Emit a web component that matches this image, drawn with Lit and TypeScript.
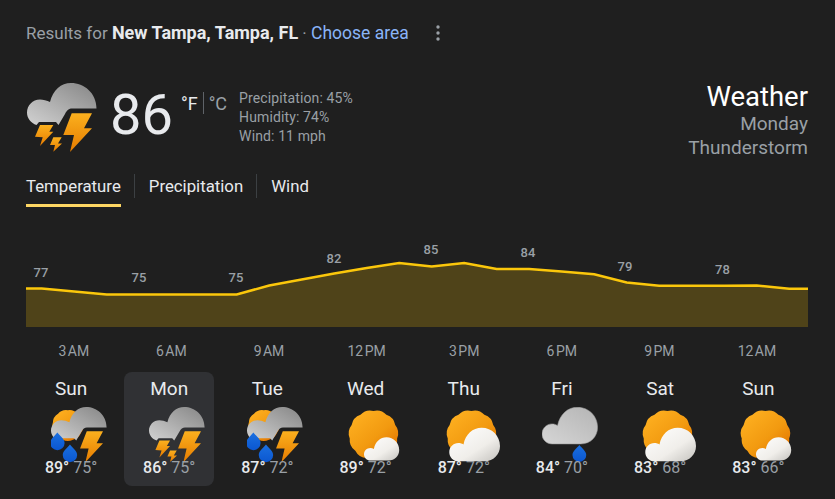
import { LitElement, html, css, svg } from "lit";
import { customElement } from "lit/decorators.js";

type Kind = "thunder" | "thunderRain" | "sunSmall" | "sunBig" | "rain";

const CLOUD_CUT =
  "M69.5 25.5C69.5 10 57 0 44 0C34 0 26 7 23 19C20 17.5 16 16.5 13 16.5C5.5 16.5 0 22.5 0 29.5C0 35.5 4 40 9.5 42L12 39L29 39L31.5 42L38 31C40 27 42 25.5 45 25.5Z";
const CLOUD =
  "M18 70C8 70 0 62 0 52C0 42 8 34 18 34C22 34 25 35 28 37C32 17 46 4 64 4C84 4 100 20 100 40C100 57 87 70 70 70Z";
const BOLT_BIG = "44.7,30.3 65,30.3 57,45.3 65,45.3 43,69 47,52 36.3,52";
const BOLT_A = "13,42 26.3,42 22.3,48.7 26.3,48.7 13,63 15.7,54.3 8,53.7";
const BOLT_B = "26.3,54.3 34.7,54.3 31,60.5 35,60.5 26.3,68.7 28,62 23,62";

function drop(cx: number, cy: number, r: number) {
  const top = cy - r * 1.45;
  return `M${cx} ${top}C${cx + r * 0.35} ${cy - r} ${cx + r} ${cy - r * 0.55} ${cx + r} ${cy}A${r} ${r} 0 1 1 ${cx - r} ${cy}C${cx - r} ${cy - r * 0.55} ${cx - r * 0.35} ${cy - r} ${cx} ${top}Z`;
}

function scallop(cx: number, cy: number, r: number, lobes: number) {
  let d = "";
  for (let i = 0; i < lobes; i++) {
    const a0 = (i / lobes) * Math.PI * 2 - Math.PI / 2;
    const a1 = ((i + 0.5) / lobes) * Math.PI * 2 - Math.PI / 2;
    const a2 = ((i + 1) / lobes) * Math.PI * 2 - Math.PI / 2;
    const inner = r * 0.95;
    const outer = r * 1.07;
    if (i === 0) d += `M${cx + inner * Math.cos(a0)} ${cy + inner * Math.sin(a0)}`;
    d += `Q${cx + outer * Math.cos(a1)} ${cy + outer * Math.sin(a1)} ${cx + inner * Math.cos(a2)} ${cy + inner * Math.sin(a2)}`;
  }
  return d + "Z";
}

function icon(kind: Kind, size: number) {
  let body;
  if (kind === "thunder") {
    body = svg`<path d=${CLOUD_CUT} fill="url(#gGrey)"/>
      <polygon points=${BOLT_BIG} fill="url(#gBolt)"/>
      <polygon points=${BOLT_A} fill="url(#gBolt)"/>
      <polygon points=${BOLT_B} fill="url(#gBolt)"/>`;
  } else if (kind === "thunderRain") {
    body = svg`<path d=${scallop(21, 23, 20, 9)} fill="url(#gSun)"/>
      <path d=${CLOUD_CUT} fill="url(#gGrey)"/>
      <polygon points=${BOLT_BIG} fill="url(#gBolt)"/>
      <path d=${drop(8, 45, 9)} fill="url(#gDrop)"/>
      <path d=${drop(23.7, 60, 9)} fill="url(#gDrop)"/>`;
  } else if (kind === "rain") {
    body = svg`<g transform="translate(0 -2.5) scale(.695)"><path d=${CLOUD} fill="url(#gFri)" stroke="#9c9c9c" stroke-width="1"/></g>
      <path d=${drop(46.7, 60, 8.6)} fill="url(#gDrop)"/>`;
  } else {
    const t = kind === "sunSmall" ? "translate(22.5 36.2) scale(.44)" : "translate(6.6 23.5) scale(.634)";
    body = svg`<path d=${scallop(34.3, 35, 31.5, 11)} fill="url(#gSun)"/>
      <g transform=${t}><path d=${CLOUD} fill="url(#gWhite)"/></g>`;
  }
  return html`<svg class="icon" width=${size} height=${size} viewBox="0 0 70 70">${body}</svg>`;
}

const TIMES = ["3 AM", "6 AM", "9 AM", "12 PM", "3 PM", "6 PM", "9 PM", "12 AM"];
const DAYS: { d: string; k: Kind; hi: number; lo: number; sel?: boolean }[] = [
  { d: "Sun", k: "thunderRain", hi: 89, lo: 75 },
  { d: "Mon", k: "thunder", hi: 86, lo: 75, sel: true },
  { d: "Tue", k: "thunderRain", hi: 87, lo: 72 },
  { d: "Wed", k: "sunSmall", hi: 89, lo: 72 },
  { d: "Thu", k: "sunBig", hi: 87, lo: 72 },
  { d: "Fri", k: "rain", hi: 84, lo: 70 },
  { d: "Sat", k: "sunBig", hi: 83, lo: 68 },
  { d: "Sun", k: "sunSmall", hi: 83, lo: 66 },
];
const LINE_Y = [288.5, 291.5, 294.5, 294.5, 294.5, 294.5, 294.5, 285.5, 279.5, 273.5, 268, 263, 266.5, 263, 269, 269, 271.5, 274.2, 282.5, 285.7, 285.7, 285.7, 285.5, 288.7];
const TEMPS = [
  { t: 77, x: 15, y: 272 },
  { t: 75, x: 113, y: 277 },
  { t: 75, x: 210, y: 277 },
  { t: 82, x: 308, y: 258 },
  { t: 85, x: 405, y: 249 },
  { t: 84, x: 502, y: 252 },
  { t: 79, x: 599, y: 266 },
  { t: 78, x: 696.5, y: 269 },
];

@customElement("app-root")
export class AppRoot extends LitElement {
  static styles = css`
    :host {
      display: block;
      width: 835px;
      height: 499px;
      overflow: hidden;
      box-sizing: border-box;
      padding: 23px 27px 0 26px;
      background: #1f1f1f;
      color: #e8eaed;
      font-family: Roboto, "Liberation Sans", sans-serif;
    }
    .defs { position: absolute; width: 0; height: 0; }
    .head {
      display: flex;
      align-items: center;
      height: 20px;
      font-size: 17px;
      line-height: 20px;
      color: #9aa0a6;
      white-space: pre;
    }
    .head b { font-weight: 700; font-size: 18px; color: #e8eaed; }
    .head .link { color: #8ab4f8; font-size: 17.5px; }
    .dots { margin-left: 26px; display: block; }
    .main { display: flex; align-items: flex-start; margin-top: 39px; height: 78px; margin-bottom: 14px; }
    .main .icon { display: block; margin: 1px 0 0 1px; flex: none; }
    .now { font-size: 56px; line-height: 66px; margin: 0 0 0 13px; color: #e8eaed; }
    .units { display: flex; align-items: center; margin: 10px 0 0 8px; font-size: 18px; height: 22px; color: #9aa0a6; }
    .units b { font-weight: 400; color: #e8eaed; }
    .units i { display: block; width: 1px; height: 22px; background: #5f6368; margin: 0 5px; }
    .stats { margin: 7px 0 0 12px; font-size: 14px; line-height: 19px; color: #9aa0a6; letter-spacing: 0.12px; }
    .title { margin-left: auto; text-align: right; color: #9aa0a6; font-size: 19px; line-height: 24px; }
    .title .w { color: #fff; font-size: 27.5px; line-height: 30px; }
    .tabs { display: flex; align-items: flex-start; height: 33px; font-size: 16.8px; line-height: 24px; }
    .tab { padding-bottom: 6px; border-bottom: 3px solid transparent; }
    .tab.on { border-bottom-color: #fdd663; }
    .sep { width: 1px; height: 24px; background: #3c4043; margin: 0 14px 0 13px; }
    .chart { display: block; margin-top: 23px; }
    .chart text { font: 500 13px Roboto, sans-serif; fill: #9aa0a6; text-anchor: middle; }
    .times { display: grid; grid-template-columns: repeat(8, 97.6px); margin: 14px 0 0 -1px; font-size: 14px; line-height: 20px; color: #9aa0a6; text-align: center; word-spacing: -2px; }
    .days { display: grid; grid-template-columns: repeat(8, 90px); column-gap: 8.2px; margin-top: 11px; }
    .day { height: 114px; box-sizing: border-box; padding-top: 7px; border-radius: 8px; display: flex; flex-direction: column; align-items: center; }
    .day.sel { background: #303134; }
    .name { font-size: 19px; line-height: 20px; color: #e8eaed; }
    .day .icon { display: block; margin: 8px 0 0 16px; }
    .hl { position: relative; font-size: 16px; line-height: 20px; margin-top: -5px; white-space: pre; color: #9aa0a6; }
    .hl b { font-weight: 500; color: #e8eaed; }
  `;

  render() {
    const pts = LINE_Y.map((y, i) => `${15.7 + 32.5 * i} ${y - 230}`);
    const line = `M0 ${LINE_Y[0] - 230}L${pts.join("L")}L782 ${LINE_Y[23] - 230}`;
    const area = `${line}L782 97L0 97Z`;
    return html`
      <svg class="defs" aria-hidden="true">
        <defs>
          <linearGradient id="gGrey" x1="0" y1="1" x2="1" y2="0">
            <stop offset="0" stop-color="#d2d2d2"/><stop offset="1" stop-color="#858585"/>
          </linearGradient>
          <linearGradient id="gFri" x1="0" y1="1" x2="1" y2="0">
            <stop offset="0" stop-color="#d6d6d6"/><stop offset="1" stop-color="#b4b4b4"/>
          </linearGradient>
          <linearGradient id="gWhite" x1="0" y1="0" x2="1" y2="1">
            <stop offset="0" stop-color="#ffffff"/><stop offset=".6" stop-color="#f0eeea"/><stop offset="1" stop-color="#c4c2be"/>
          </linearGradient>
          <linearGradient id="gBolt" x1="0" y1="0" x2="0" y2="1">
            <stop offset="0" stop-color="#fbb01e"/><stop offset="1" stop-color="#e67c00"/>
          </linearGradient>
          <linearGradient id="gSun" x1=".15" y1=".1" x2=".85" y2=".9">
            <stop offset="0" stop-color="#fdae1f"/><stop offset=".55" stop-color="#f29a10"/><stop offset="1" stop-color="#e37400"/>
          </linearGradient>
          <linearGradient id="gDrop" x1="0" y1="0" x2="0" y2="1">
            <stop offset="0" stop-color="#1a6fe0"/><stop offset="1" stop-color="#0b57d0"/>
          </linearGradient>
        </defs>
      </svg>
      <div class="head">
        <span>Results for </span><b>New Tampa, Tampa, FL</b><span> · </span><span class="link">Choose area</span>
        <svg class="dots" width="6" height="18" viewBox="0 0 6 18">
          <circle cx="3" cy="3" r="1.7" fill="#9aa0a6"/><circle cx="3" cy="9" r="1.7" fill="#9aa0a6"/><circle cx="3" cy="15" r="1.7" fill="#9aa0a6"/>
        </svg>
      </div>
      <div class="main">
        ${icon("thunder", 70)}
        <div class="now">86</div>
        <div class="units"><b>°F</b><i></i><span>°C</span></div>
        <div class="stats">
          <div>Precipitation: 45%</div>
          <div>Humidity: 74%</div>
          <div>Wind: 11 mph</div>
        </div>
        <div class="title">
          <div class="w">Weather</div>
          <div>Monday</div>
          <div>Thunderstorm</div>
        </div>
      </div>
      <div class="tabs">
        <div class="tab on">Temperature</div>
        <div class="sep"></div>
        <div class="tab">Precipitation</div>
        <div class="sep"></div>
        <div class="tab">Wind</div>
      </div>
      <svg class="chart" width="782" height="97" viewBox="0 0 782 97">
        <path d=${area} fill="#4f4319"/>
        <path d=${line} fill="none" stroke="#fbc70b" stroke-width="2.5"/>
        ${TEMPS.map((t) => svg`<text x=${t.x} y=${t.y - 230 + 4.5}>${t.t}</text>`)}
      </svg>
      <div class="times">${TIMES.map((t) => html`<div>${t}</div>`)}</div>
      <div class="days">
        ${DAYS.map(
          (d) => html`<div class="day ${d.sel ? "sel" : ""}">
            <div class="name">${d.d}</div>
            ${icon(d.k, 56)}
            <div class="hl"><b>${d.hi}°</b> ${d.lo}°</div>
          </div>`
        )}
      </div>
    `;
  }
}
